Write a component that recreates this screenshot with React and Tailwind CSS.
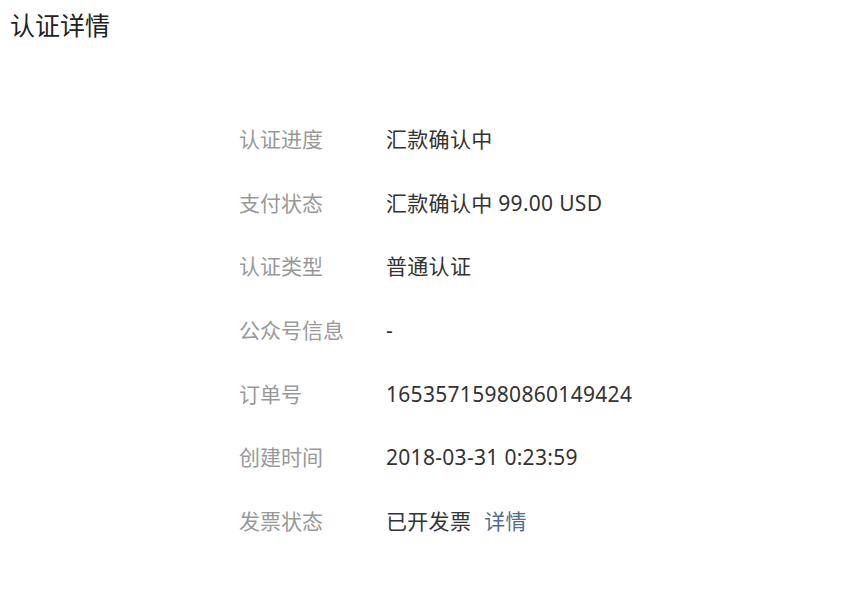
export default function App() {
  const rows = [
    ["认证进度", "汇款确认中"],
    ["支付状态", "汇款确认中 99.00 USD"],
    ["认证类型", "普通认证"],
    ["公众号信息", "-"],
    ["订单号", "16535715980860149424"],
    ["创建时间", "2018-03-31 0:23:59"],
    ["发票状态", null],
  ];
  return (
    <div className="w-[858px] h-[603px] bg-white" style={{ fontFamily: '"Noto Sans", "Noto Sans CJK SC", sans-serif' }}>
      <h1 className="pl-[10px] pt-[8px] text-[25px] leading-[34px] text-[#222] font-normal">认证详情</h1>
      <div className="pl-[239px] pt-[82px] flex flex-col gap-[33.67px]">
        {rows.map(([k, v]) => (
          <div key={k} className="flex items-center h-[30px] text-[21px] leading-[30px]">
            <div className="w-[147px] text-[#999]">{k}</div>
            <div className="text-[#333] tracking-[0.3px]">
              {v === null ? (
                <span>已开发票<a className="ml-[13px] text-[#576b95]">详情</a></span>
              ) : v}
            </div>
          </div>
        ))}
      </div>
    </div>
  );
}
